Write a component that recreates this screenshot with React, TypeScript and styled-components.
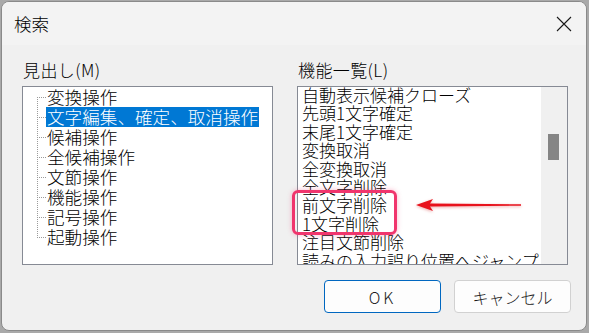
import React from "react";
import styled, { createGlobalStyle } from "styled-components";

const Global = createGlobalStyle`
  html, body { margin: 0; padding: 0; }
  body {
    background: #a9a9a9;
    font-family: "Noto Sans CJK JP", "Noto Sans", sans-serif;
    font-weight: 300;
    color: #000;
  }
`;

const Page = styled.div`
  width: 589px;
  height: 333px;
  box-sizing: border-box;
  padding: 1px 0 0 1px;
  display: flex;
  align-items: flex-start;
`;

const Dialog = styled.div`
  width: 586px;
  height: 330px;
  box-sizing: border-box;
  border: 1px solid #8a8a8a;
  border-radius: 8px;
  overflow: hidden;
  background: #f0f0f0;
  display: flex;
  flex-direction: column;
`;

const TitleBar = styled.div`
  height: 43px;
  flex: none;
  background: #f3f3f3;
  display: flex;
  align-items: center;
  justify-content: space-between;
  padding: 0 14px 0 12px;
`;

const Title = styled.div`
  font-size: 17.5px;
  line-height: 20px;
  margin-top: 1px;
`;

const CloseIcon = styled.svg`
  width: 16px;
  height: 16px;
  margin-top: 1px;
`;

const Body = styled.div`
  flex: 1;
  display: flex;
  flex-direction: column;
  padding: 15px 15px 0 20px;
`;

const Columns = styled.div`
  display: grid;
  grid-template-columns: 251px 271px;
  column-gap: 24px;
`;

const Column = styled.div`
  position: relative;
  display: flex;
  flex-direction: column;
`;

const Label = styled.div`
  font-size: 17px;
  line-height: 20px;
  height: 20px;
  margin-bottom: 6px;
  padding-left: 1px;
  letter-spacing: 0.4px;
`;

const ListBox = styled.div`
  height: 179px;
  box-sizing: border-box;
  border: 1px solid #868a94;
  background: #fff;
  display: flex;
  overflow: hidden;
`;

const Tree = styled.div`
  padding: 0 0 0 14px;
  display: flex;
  flex-direction: column;
`;

const dotsV = "repeating-linear-gradient(to bottom, #9a9a9a 0 1px, transparent 1px 2px)";
const dotsH = "repeating-linear-gradient(to right, #9a9a9a 0 1px, transparent 1px 2px)";

const TreeRow = styled.div<{ $first?: boolean; $last?: boolean }>`
  position: relative;
  height: 20px;
  padding-left: 9px;
  display: flex;
  align-items: center;
  font-size: 17.6px;
  white-space: nowrap;
  &::before {
    content: "";
    position: absolute;
    left: 0;
    top: 10px;
    width: 9px;
    height: 1px;
    background: ${dotsH};
  }
  &::after {
    content: "";
    position: absolute;
    left: 0;
    width: 1px;
    top: ${(p) => (p.$first ? "10px" : "0")};
    bottom: ${(p) => (p.$last ? "10px" : "0")};
    background: ${dotsV};
  }
`;

const TreeText = styled.span<{ $selected?: boolean }>`
  height: 20px;
  line-height: 20px;
  padding: 0 1px;
  background: ${(p) => (p.$selected ? "#0078d4" : "transparent")};
  color: ${(p) => (p.$selected ? "#fff" : "#000")};
`;

const Items = styled.div`
  flex: 1;
  padding: 0 0 0 4px;
  display: flex;
  flex-direction: column;
  margin-top: -1px;
`;

const Item = styled.div`
  font-size: 17px;
  line-height: 18.4px;
  height: 18.4px;
  white-space: nowrap;
  flex: none;
`;

const ScrollTrack = styled.div`
  width: 26px;
  flex: none;
  background: #f0f0f0;
  padding: 47px 0 0 7px;
  box-sizing: border-box;
`;

const Thumb = styled.div`
  width: 11px;
  height: 26px;
  background: #858585;
`;

const Highlight = styled.div`
  position: absolute;
  left: -5px;
  top: 130px;
  width: 105px;
  height: 45px;
  box-sizing: border-box;
  border: 3px solid #f0356d;
  border-radius: 6px;
  box-shadow: 0 0 5px rgba(240, 53, 109, 0.35);
  pointer-events: none;
`;

const Arrow = styled.svg`
  position: absolute;
  left: 119px;
  top: 138px;
  width: 106px;
  height: 14px;
  overflow: visible;
  filter: drop-shadow(0 1px 1.5px rgba(200, 0, 0, 0.35));
`;

const ButtonRow = styled.div`
  display: flex;
  justify-content: flex-end;
  gap: 13px;
  margin-top: 15px;
`;

const Button = styled.button<{ $primary?: boolean }>`
  width: 117px;
  height: 33px;
  box-sizing: border-box;
  border-radius: 4px;
  border: 1px solid ${(p) => (p.$primary ? "#0067c0" : "#d1d1d1")};
  background: #fdfdfd;
  font-family: "Noto Sans CJK JP", "Noto Sans", sans-serif;
  font-weight: 300;
  font-size: 16px;
  color: #1a1a1a;
  padding: 0;
  display: flex;
  align-items: center;
  justify-content: center;
  letter-spacing: ${(p) => (p.$primary ? "3px" : "0")};
`;

const treeItems = [
  "変換操作",
  "文字編集、確定、取消操作",
  "候補操作",
  "全候補操作",
  "文節操作",
  "機能操作",
  "記号操作",
  "起動操作",
];

const listItems = [
  "自動表示候補クローズ",
  "先頭1文字確定",
  "末尾1文字確定",
  "変換取消",
  "全変換取消",
  "全文字削除",
  "前文字削除",
  "1文字削除",
  "注目文節削除",
  "読みの入力誤り位置へジャンプ",
];

export default function App() {
  return (
    <>
      <Global />
      <Page>
        <Dialog>
          <TitleBar>
            <Title>検索</Title>
            <CloseIcon viewBox="0 0 16 16">
              <path d="M1 1 L15 15 M15 1 L1 15" stroke="#1a1a1a" strokeWidth="1.1" fill="none" />
            </CloseIcon>
          </TitleBar>
          <Body>
            <Columns>
              <Column>
                <Label>見出し(M)</Label>
                <ListBox>
                  <Tree>
                    {treeItems.map((t, i) => (
                      <TreeRow key={t} $first={i === 0} $last={i === treeItems.length - 1}>
                        <TreeText $selected={i === 1}>{t}</TreeText>
                      </TreeRow>
                    ))}
                  </Tree>
                </ListBox>
              </Column>
              <Column>
                <Label>機能一覧(L)</Label>
                <ListBox>
                  <Items>
                    {listItems.map((t) => (
                      <Item key={t}>{t}</Item>
                    ))}
                  </Items>
                  <ScrollTrack>
                    <Thumb />
                  </ScrollTrack>
                </ListBox>
                <Highlight />
                <Arrow viewBox="0 0 106 14">
                  <polygon points="0,7 17,1 14,5.6 105,6.3 105,7.7 14,8.4 17,13" fill="#e8121c" />
                </Arrow>
              </Column>
            </Columns>
            <ButtonRow>
              <Button $primary>OK</Button>
              <Button>キャンセル</Button>
            </ButtonRow>
          </Body>
        </Dialog>
      </Page>
    </>
  );
}
